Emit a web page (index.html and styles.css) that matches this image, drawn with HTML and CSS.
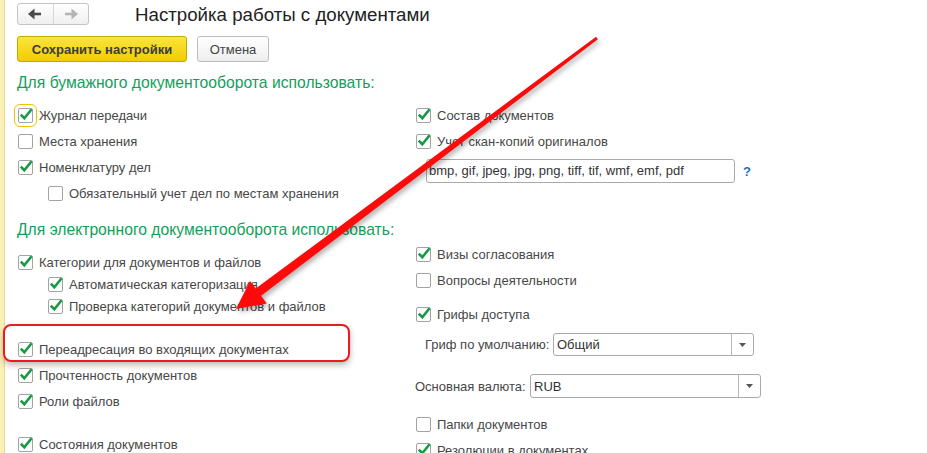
FILE: index.html
```html
<!DOCTYPE html>
<html lang="ru">
<head>
<meta charset="utf-8">
<title>Настройка работы с документами</title>
<link rel="stylesheet" href="styles.css">
</head>
<body>
<div class="page">
  <div class="strip"></div>
  <div class="content">
    <div class="topbar">
      <div class="nav">
        <button class="nav-btn"><svg width="14" height="12" viewBox="0 0 14 12"><path d="M5 6H13" stroke="#4a4a4a" stroke-width="2.6"/><path d="M0 6L6.5 0.5V11.5Z" fill="#4a4a4a"/></svg></button>
        <button class="nav-btn"><svg width="14" height="12" viewBox="0 0 14 12"><path d="M1 6H9" stroke="#b4b4b4" stroke-width="2.6"/><path d="M14 6L7.5 0.5V11.5Z" fill="#b4b4b4"/></svg></button>
      </div>
      <h1 class="title">Настройка работы с документами</h1>
    </div>

    <div class="actions">
      <button class="btn btn-primary">Сохранить настройки</button>
      <button class="btn btn-default">Отмена</button>
    </div>

    <h2 class="group-title">Для бумажного документооборота использовать:</h2>
    <div class="group">
      <div class="col">
        <div class="row"><span class="cb on focus"><svg viewBox="0 0 16 16"><path d="M2.8 7.6L6.3 11.2L13.6 2.2"/></svg></span>Журнал передачи</div>
        <div class="row"><span class="cb"></span>Места хранения</div>
        <div class="row"><span class="cb on"><svg viewBox="0 0 16 16"><path d="M2.8 7.6L6.3 11.2L13.6 2.2"/></svg></span>Номенклатуру дел</div>
        <div class="row indent"><span class="cb"></span>Обязательный учет дел по местам хранения</div>
      </div>
      <div class="col">
        <div class="row"><span class="cb on"><svg viewBox="0 0 16 16"><path d="M2.8 7.6L6.3 11.2L13.6 2.2"/></svg></span>Состав документов</div>
        <div class="row"><span class="cb on"><svg viewBox="0 0 16 16"><path d="M2.8 7.6L6.3 11.2L13.6 2.2"/></svg></span>Учет скан-копий оригиналов</div>
        <div class="field-row">
          <div class="input">bmp, gif, jpeg, jpg, png, tiff, tif, wmf, emf, pdf</div>
          <span class="help">?</span>
        </div>
      </div>
    </div>

    <h2 class="group-title second">Для электронного документооборота использовать:</h2>
    <div class="group">
      <div class="col col-e-left">
        <div class="row short"><span class="cb on"><svg viewBox="0 0 16 16"><path d="M2.8 7.6L6.3 11.2L13.6 2.2"/></svg></span>Категории для документов и файлов</div>
        <div class="row short indent"><span class="cb on"><svg viewBox="0 0 16 16"><path d="M2.8 7.6L6.3 11.2L13.6 2.2"/></svg></span>Автоматическая категоризация</div>
        <div class="row short indent"><span class="cb on"><svg viewBox="0 0 16 16"><path d="M2.8 7.6L6.3 11.2L13.6 2.2"/></svg></span>Проверка категорий документов и файлов</div>
        <div class="row gap-a"><span class="cb on"><svg viewBox="0 0 16 16"><path d="M2.8 7.6L6.3 11.2L13.6 2.2"/></svg></span>Переадресация во входящих документах</div>
        <div class="row"><span class="cb on"><svg viewBox="0 0 16 16"><path d="M2.8 7.6L6.3 11.2L13.6 2.2"/></svg></span>Прочтенность документов</div>
        <div class="row"><span class="cb on"><svg viewBox="0 0 16 16"><path d="M2.8 7.6L6.3 11.2L13.6 2.2"/></svg></span>Роли файлов</div>
        <div class="row gap-b"><span class="cb on"><svg viewBox="0 0 16 16"><path d="M2.8 7.6L6.3 11.2L13.6 2.2"/></svg></span>Состояния документов</div>
      </div>
      <div class="col col-e-right">
        <div class="row"><span class="cb on"><svg viewBox="0 0 16 16"><path d="M2.8 7.6L6.3 11.2L13.6 2.2"/></svg></span>Визы согласования</div>
        <div class="row"><span class="cb"></span>Вопросы деятельности</div>
        <div class="row gap-c"><span class="cb on"><svg viewBox="0 0 16 16"><path d="M2.8 7.6L6.3 11.2L13.6 2.2"/></svg></span>Грифы доступа</div>
        <div class="select-row grif">
          <span class="sel-label">Гриф по умолчанию:</span>
          <div class="select"><span class="sel-value">Общий</span><span class="sel-btn"><svg width="7" height="4" viewBox="0 0 7 4"><path d="M0 0H7L3.5 4Z" fill="#555"/></svg></span></div>
        </div>
        <div class="select-row currency">
          <span class="sel-label">Основная валюта:</span>
          <div class="select"><span class="sel-value">RUB</span><span class="sel-btn"><svg width="7" height="4" viewBox="0 0 7 4"><path d="M0 0H7L3.5 4Z" fill="#555"/></svg></span></div>
        </div>
        <div class="row gap-d"><span class="cb"></span>Папки документов</div>
        <div class="row"><span class="cb on"><svg viewBox="0 0 16 16"><path d="M2.8 7.6L6.3 11.2L13.6 2.2"/></svg></span>Резолюции в документах</div>
      </div>
    </div>
  </div>

  <div class="highlight"></div>
  <svg class="arrow" width="927" height="453" viewBox="0 0 927 453">
    <polygon points="596.1,36.8 255.7,288.6 250,281 236,309 266.8,303.4 261.1,295.8 597.9,39.2" fill="#ff0a0a"/>
  </svg>
</div>
</body>
</html>
```

FILE: styles.css
```css
* { box-sizing: border-box; }

html, body {
  margin: 0;
  padding: 0;
  background: #ffffff;
}

body {
  font-family: "Liberation Sans", Arial, sans-serif;
  font-size: 13px;
  color: #444444;
  width: 927px;
  height: 453px;
  overflow: hidden;
}

.page {
  position: relative;
  display: flex;
  width: 927px;
  height: 453px;
  overflow: hidden;
}

.strip {
  width: 5px;
  flex: none;
  background: #fbf1b6;
  border-right: 1px solid #e9da8c;
}

.content {
  flex: 1;
  padding-left: 12px;
}

/* top bar */
.topbar {
  display: flex;
  align-items: center;
  padding-top: 3px;
  height: 25px;
}

.nav {
  display: flex;
  width: 72px;
  height: 22px;
  border: 1px solid #c4c4c4;
  border-radius: 3px;
  background: linear-gradient(#ffffff, #efefef);
}

.nav-btn {
  flex: 1;
  border: 0;
  background: transparent;
  padding: 0;
  display: flex;
  align-items: center;
  justify-content: center;
}

.nav-btn + .nav-btn {
  border-left: 1px solid #d6d6d6;
}

.title {
  margin: 0 0 0 46px;
  font-size: 18.7px;
  font-weight: normal;
  color: #222222;
  line-height: 22px;
  position: relative;
  top: 1px;
}

/* action buttons */
.actions {
  display: flex;
  margin-top: 11px;
  height: 26px;
}

.btn {
  height: 26px;
  border-radius: 3px;
  font-family: "Liberation Sans", Arial, sans-serif;
  font-size: 13px;
  padding: 0;
  color: #444444;
}

.btn-primary {
  width: 170px;
  font-weight: bold;
  color: #3c3c3c;
  background: linear-gradient(#fbe53e, #f1cd00);
  border: 1px solid #c6a900;
}

.btn-default {
  width: 72px;
  margin-left: 10px;
  background: linear-gradient(#ffffff, #eeeeee);
  border: 1px solid #bdbdbd;
}

/* groups */
.group-title {
  margin: 11px 0 0 0;
  font-size: 15.7px;
  font-weight: normal;
  color: #11a05a;
  line-height: 20px;
  height: 20px;
}

.group-title.second {
  margin-top: 14px;
}

.group {
  display: grid;
  grid-template-columns: 398px 1fr;
  margin-top: 9px;
}

.group-title.second + .group {
  margin-top: 0;
}

.col {
  display: flex;
  flex-direction: column;
}

.row {
  display: flex;
  align-items: center;
  height: 26px;
  white-space: nowrap;
  color: #474747;
}

.row.short { height: 22px; }
.row.indent { padding-left: 30px; }

.cb {
  position: relative;
  width: 15px;
  height: 15px;
  flex: none;
  margin-left: 1px;
  margin-right: 6px;
  border: 1px solid #a3a3a3;
  border-radius: 2px;
  background: #ffffff;
}

.cb svg {
  position: absolute;
  left: -1px;
  top: -2px;
  width: 16px;
  height: 16px;
  overflow: visible;
}

.cb svg path {
  fill: none;
  stroke: #169b45;
  stroke-width: 2.6;
  stroke-linecap: butt;
  stroke-linejoin: miter;
}

.cb.focus {
  outline: 1px solid #efc300;
  outline-offset: 3px;
}

/* text input */
.field-row {
  display: flex;
  align-items: center;
  margin-top: 5px;
  height: 24px;
}

.input {
  margin-left: 11px;
  width: 309px;
  height: 24px;
  border: 1px solid #aaaaaa;
  border-radius: 3px;
  padding-left: 2px;
  line-height: 22px;
  color: #333333;
  white-space: nowrap;
  overflow: hidden;
}

.help {
  margin-left: 8px;
  color: #1f6fc5;
  font-size: 13px;
  font-weight: bold;
}

/* electronic group */
.col-e-left { padding-top: 11px; }
.col-e-right { padding-top: 1px; }

.row.gap-a { margin-top: 19px; }
.row.gap-b { margin-top: 17px; }
.row.gap-c { margin-top: 8px; }
.row.gap-d { margin-top: 13px; }

.select-row {
  display: flex;
  align-items: center;
  white-space: nowrap;
}

.select-row.grif {
  margin-top: 6px;
  height: 23px;
  padding-left: 10px;
}

.select-row.grif .sel-label { width: 128px; }
.select-row.grif .select { width: 201px; height: 23px; }

.select-row.currency {
  margin-top: 18px;
  height: 24px;
}

.select-row.currency .sel-label { width: 115px; }
.select-row.currency .select { width: 231px; height: 24px; }

.sel-label { color: #474747; flex: none; }

.select {
  display: flex;
  border: 1px solid #aaaaaa;
  border-radius: 3px;
  background: #ffffff;
}

.sel-value {
  flex: 1;
  padding-left: 3px;
  color: #333333;
  display: flex;
  align-items: center;
}

.sel-btn {
  width: 22px;
  border-left: 1px solid #b8b8b8;
  display: flex;
  align-items: center;
  justify-content: center;
}

/* annotations */
.highlight {
  position: absolute;
  left: 3px;
  top: 324px;
  width: 347px;
  height: 38px;
  border: 2px solid #ea1a1f;
  border-radius: 8px;
  box-shadow: 0 3px 6px rgba(0, 0, 0, 0.28);
  pointer-events: none;
}

.arrow {
  position: absolute;
  left: 0;
  top: 0;
  pointer-events: none;
  filter: drop-shadow(2px 3px 2.5px rgba(0, 0, 0, 0.3));
}
```
